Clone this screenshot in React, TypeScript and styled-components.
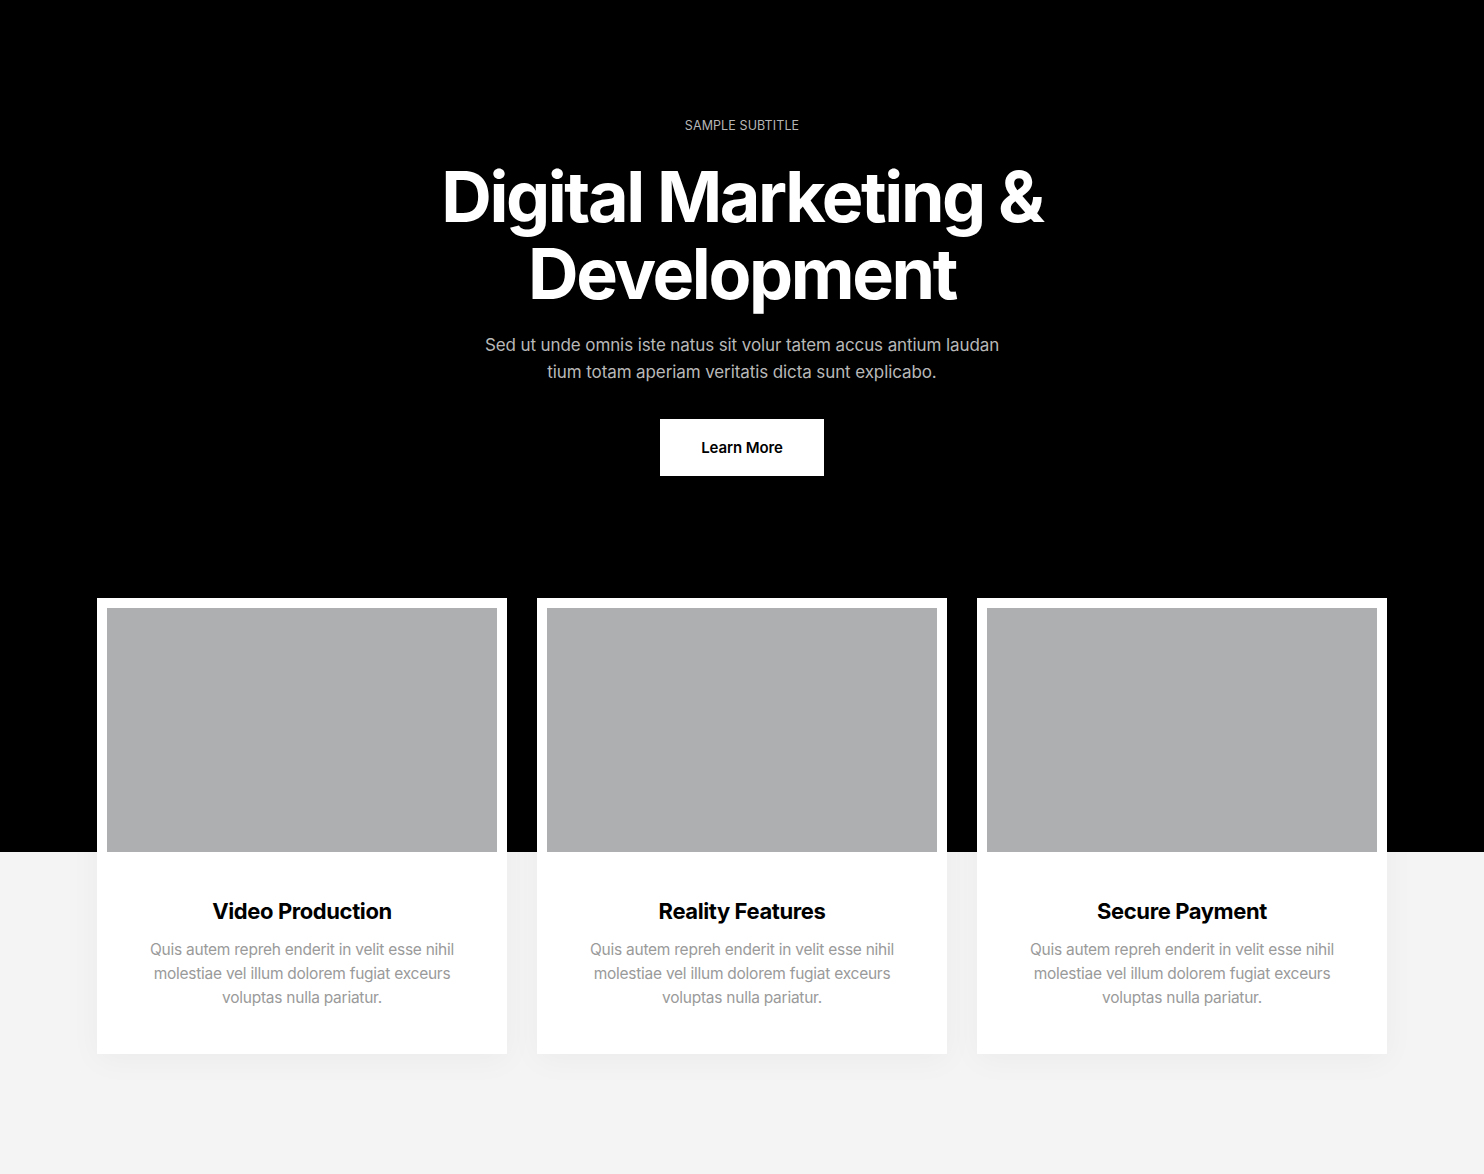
import React from "react";
import styled, { createGlobalStyle } from "styled-components";

const Global = createGlobalStyle`
  html, body { margin: 0; padding: 0; background: #f4f4f4; }
  body { font-family: Inter, "Noto Sans", "Liberation Sans", sans-serif; -webkit-font-smoothing: antialiased; }
  * { box-sizing: border-box; }
`;

const Page = styled.div`
  min-height: 1174px;
  display: flex;
  flex-direction: column;
`;

const Hero = styled.section`
  background: #000;
  display: flex;
  flex-direction: column;
  align-items: center;
  padding-top: 116px;
  height: 598px;
  text-align: center;
`;

const Subtitle = styled.div`
  font-size: 12.5px;
  line-height: 20px;
  color: #b5b5b5;
  text-transform: uppercase;
  letter-spacing: 0.1px;
`;

const Title = styled.h1`
  margin: 22px 0 0;
  font-size: 70px;
  line-height: 77px;
  font-weight: 700;
  letter-spacing: -2.4px;
  color: #fff;
  max-width: 640px;
`;

const Lead = styled.p`
  margin: 20px 0 0;
  font-size: 17px;
  line-height: 27px;
  color: #b8b8b8;
  max-width: 540px;
  letter-spacing: -0.1px;
`;

const Button = styled.a`
  margin-top: 33px;
  display: flex;
  align-items: center;
  justify-content: center;
  width: 164px;
  height: 57px;
  background: #fff;
  color: #000;
  font-size: 15px;
  font-weight: 600;
  text-decoration: none;
  letter-spacing: -0.1px;
`;

const CardsSection = styled.section`
  flex: 1;
  background: linear-gradient(to bottom, #000 0, #000 254px, #f4f4f4 254px);
  display: flex;
  justify-content: center;
  padding-bottom: 121px;
`;

const Grid = styled.div`
  display: grid;
  grid-template-columns: repeat(3, 410px);
  gap: 30px;
`;

const Card = styled.div`
  background: #fff;
  padding: 10px 10px 44px;
  box-shadow: 0 6px 30px rgba(0, 0, 0, 0.04);
  display: flex;
  flex-direction: column;
  align-items: center;
  text-align: center;
`;

const Thumb = styled.div`
  width: 390px;
  height: 244px;
  background: #aeafb0;
`;

const CardTitle = styled.h3`
  margin: 44px 0 0;
  font-size: 22px;
  line-height: 30px;
  font-weight: 700;
  color: #000;
  letter-spacing: -0.4px;
`;

const CardText = styled.p`
  margin: 12px 0 0;
  font-size: 15.5px;
  line-height: 24px;
  color: #9a9a9a;
  max-width: 320px;
  letter-spacing: -0.25px;
`;

const cards = ["Video Production", "Reality Features", "Secure Payment"];

export default function App() {
  return (
    <Page>
      <Global />
      <Hero>
        <Subtitle>Sample Subtitle</Subtitle>
        <Title>Digital Marketing &amp; Development</Title>
        <Lead>
          Sed ut unde omnis iste natus sit volur tatem accus antium laudan tium totam aperiam veritatis dicta sunt explicabo.
        </Lead>
        <Button href="#">Learn More</Button>
      </Hero>
      <CardsSection>
        <Grid>
          {cards.map((t) => (
            <Card key={t}>
              <Thumb />
              <CardTitle>{t}</CardTitle>
              <CardText>
                Quis autem repreh enderit in velit esse nihil molestiae vel illum dolorem fugiat exceurs voluptas nulla pariatur.
              </CardText>
            </Card>
          ))}
        </Grid>
      </CardsSection>
    </Page>
  );
}
